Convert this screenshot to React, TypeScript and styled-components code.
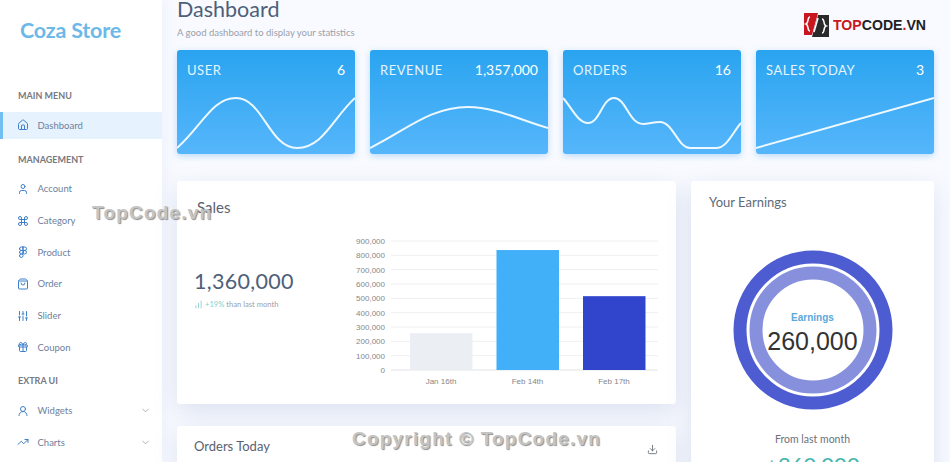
import React from 'react'
import styled, { createGlobalStyle } from 'styled-components'
import {
  House,
  User,
  Command,
  Figma,
  ShoppingBag,
  SlidersVertical,
  Gift,
  UserRound,
  TrendingUp,
  ChevronDown,
  Download,
  ChartNoAxesColumnIncreasing,
} from 'lucide-react'

const GlobalStyle = createGlobalStyle`
  html, body {
    margin: 0;
    padding: 0;
    height: 462px;
    overflow: hidden;
    background: #f8faff;
    font-family: Lato, "Open Sans", sans-serif;
  }
`

const Page = styled.div`
  position: relative;
  display: flex;
  width: 950px;
  height: 462px;
  overflow: hidden;
`

const Sidebar = styled.aside`
  flex: 0 0 162px;
  background: #fff;
  padding-top: 18px;
  box-sizing: border-box;
  box-shadow: 3px 0 12px rgba(120, 140, 190, .08);
`

const Logo = styled.div`
  margin-left: 20px;
  height: 25px;
  line-height: 25px;
  font-size: 21.5px;
  font-weight: 700;
  letter-spacing: -.2px;
  color: #6cb9e8;
`

const MenuLabel = styled.div<{ $top: number }>`
  margin: ${p => p.$top}px 0 9.7px 18px;
  height: 12px;
  line-height: 12px;
  font-size: 9px;
  font-weight: 700;
  color: #77797f;
`

const MenuItem = styled.div<{ $active?: boolean }>`
  display: flex;
  align-items: center;
  height: 27px;
  margin-top: 4.7px;
  padding: 0 11px 0 ${p => (p.$active ? 14 : 17)}px;
  font-size: 9.5px;
  color: #6e7f9d;
  background: ${p => (p.$active ? '#e6f2fe' : 'transparent')};
  border-left: ${p => (p.$active ? '3px solid #74bdf3' : 'none')};
  & > svg:first-child {
    width: 12px;
    height: 12px;
    color: #3f7fc9;
    margin-right: 8.5px;
    flex: none;
  }
`

const Spacer = styled.span`
  flex: 1;
`

const Caret = styled(ChevronDown)`
  width: 11px;
  height: 11px;
  color: #a5abb6;
`

const Main = styled.main`
  flex: 1;
  padding: 0 16px 0 15px;
  min-width: 0;
`

const Title = styled.h1`
  margin: 0;
  height: 20px;
  line-height: 18px;
  font-size: 21.5px;
  font-weight: 400;
  color: #4e6079;
`

const Subtitle = styled.p`
  margin: 6px 0 0;
  height: 13px;
  line-height: 13px;
  font-size: 9.5px;
  color: #9aa0aa;
`

const StatRow = styled.div`
  display: grid;
  grid-template-columns: repeat(4, 178px);
  gap: 15px;
  margin-top: 11px;
`

const StatCard = styled.div`
  height: 104px;
  display: flex;
  flex-direction: column;
  justify-content: space-between;
  border-radius: 3px;
  background: linear-gradient(180deg, #2aa4f0, #56b6fb);
  box-shadow: 0 2px 6px rgba(70, 160, 240, .35);
  overflow: hidden;
  color: #e4f4ff;
`

const StatHead = styled.div`
  display: flex;
  justify-content: space-between;
  align-items: center;
  padding: 11px 10px 0;
  font-size: 13px;
  letter-spacing: .55px;
`

const StatValue = styled.span`
  font-size: 14px;
  letter-spacing: 0;
  color: #fff;
`

const Spark = styled.svg`
  display: block;
  width: 178px;
  height: 60px;
  fill: none;
  stroke: #eef8ff;
  stroke-width: 2;
`

const Columns = styled.div`
  display: grid;
  grid-template-columns: 499px 243px;
  gap: 15px;
  margin-top: 27px;
`

const Stack = styled.div`
  display: flex;
  flex-direction: column;
  gap: 22px;
`

const Panel = styled.section`
  background: #fff;
  border-radius: 3px;
  box-shadow: 0 8px 24px rgba(110, 130, 180, .2);
`

const SalesPanel = styled(Panel)`
  height: 223px;
  box-sizing: border-box;
  padding: 17px 11px 0 17px;
`

const SalesTitle = styled.h2`
  margin: 0 0 0 3px;
  height: 18px;
  line-height: 18px;
  font-size: 15px;
  font-weight: 400;
  color: #5a6270;
`

const SalesBody = styled.div`
  display: flex;
  justify-content: space-between;
`

const SalesFigure = styled.div`
  padding-top: 52px;
`

const BigNumber = styled.div`
  font-size: 21.5px;
  line-height: 26px;
  letter-spacing: .3px;
  color: #4e6079;
`

const Trend = styled.div`
  display: flex;
  align-items: center;
  margin-top: 5px;
  font-size: 7.6px;
  color: #9aa0aa;
  & svg {
    width: 9px;
    height: 9px;
    color: #7cc8c0;
    margin-right: 2px;
  }
  & b {
    font-weight: 400;
    color: #86d0c8;
    margin-right: 2px;
  }
`

const BarChart = styled.svg`
  display: block;
  width: 325px;
  height: 160px;
  margin-top: 16px;
  font-family: "Liberation Sans", Arial, sans-serif;
  font-size: 8px;
  fill: #85878c;
`

const OrdersPanel = styled(Panel)`
  display: flex;
  justify-content: space-between;
  align-items: center;
  height: 40px;
  padding: 0 18px 0 17px;
`

const OrdersTitle = styled.h2`
  margin: 0;
  font-size: 13px;
  font-weight: 400;
  color: #5a6270;
`

const OrdersAction = styled(Download)`
  width: 11px;
  height: 11px;
  color: #6c727c;
  margin-top: 6px;
`

const EarningsPanel = styled(Panel)`
  height: 300px;
  padding: 14px 18px 0;
  text-align: center;
`

const EarningsTitle = styled.h2`
  margin: 0;
  height: 14px;
  line-height: 14px;
  text-align: left;
  font-size: 13px;
  font-weight: 400;
  color: #5f6b78;
`

const Donut = styled.div`
  position: relative;
  width: 160px;
  height: 160px;
  margin: 41px auto 0;
  font-family: "Liberation Sans", Arial, sans-serif;
  & svg {
    display: block;
    fill: none;
  }
`

const DonutCaption = styled.div`
  position: absolute;
  inset: 61px 0 auto;
  font-size: 10px;
  font-weight: 700;
  line-height: 14px;
  color: #5aa9dd;
`

const DonutValue = styled.div`
  position: absolute;
  inset: 76px 0 auto;
  font-size: 25px;
  line-height: 30px;
  color: #333;
`

const FromLabel = styled.div`
  margin-top: 22px;
  font-size: 10.5px;
  line-height: 14px;
  color: #6c727c;
`

const FromValue = styled.div`
  margin-top: 6px;
  font-size: 22px;
  line-height: 26px;
  color: #45b7ad;
`

const Watermark = styled.div<{ $x: number; $y: number }>`
  position: absolute;
  left: ${p => p.$x}px;
  top: ${p => p.$y}px;
  font-family: "Liberation Sans", Arial, sans-serif;
  font-size: 19px;
  font-weight: 700;
  line-height: 1;
  letter-spacing: 1.2px;
  white-space: nowrap;
  color: #c4c4c4;
  text-shadow: 1px 1px 1px #8e8e8e;
`

const Brand = styled.div`
  position: absolute;
  left: 803px;
  top: 12px;
  display: flex;
  align-items: center;
  gap: 3px;
  font-family: "Liberation Sans", Arial, sans-serif;
  font-size: 15.5px;
  font-weight: 700;
  color: #222;
`

const BrandText = styled.span`
  display: inline-block;
  transform: scaleX(.91);
  transform-origin: left center;
  white-space: nowrap;
`

const BrandRed = styled.span`
  color: #c8171e;
`

const menuTop = [
  { label: 'Account', icon: <User /> },
  { label: 'Category', icon: <Command /> },
  { label: 'Product', icon: <Figma /> },
  { label: 'Order', icon: <ShoppingBag /> },
  { label: 'Slider', icon: <SlidersVertical /> },
  { label: 'Coupon', icon: <Gift /> },
]

const stats = [
  { label: 'USER', value: '6', line: 'M0 98C25 76 35 48 59 48C86 48 92 98 120 98C146 98 156 68 178 48' },
  { label: 'REVENUE', value: '1,357,000', line: 'M0 98C35 81 60 57 98 57C125 57 150 70 178 78' },
  {
    label: 'ORDERS',
    value: '16',
    line: 'M0 48C9 58 15 73 25 73C37 73 39 48 51 48C63 48 66 74 80 74C86 74 90 72 97 72C110 72 115 98 127 98L153 98C164 98 170 82 178 73',
  },
  { label: 'SALES TODAY', value: '3', line: 'M0 98L178 48' },
]

const ticks = [900, 800, 700, 600, 500, 400, 300, 200, 100, 0]
const bars = [
  { label: 'Jan 16th', x: 70, value: 257, color: '#ebeff4' },
  { label: 'Feb 14th', x: 156.5, value: 837, color: '#41b0f8' },
  { label: 'Feb 17th', x: 243, value: 515, color: '#3144cc' },
]
// y of the zero line and pixels per thousand inside the chart
const baseY = 138
const perK = 129 / 900

const App = () => (
  <Page>
    <GlobalStyle />
    <Sidebar>
      <Logo>Coza Store</Logo>
      <MenuLabel $top={47}>MAIN MENU</MenuLabel>
      <MenuItem $active><House />Dashboard</MenuItem>
      <MenuLabel $top={15}>MANAGEMENT</MenuLabel>
      {menuTop.map(item => (
        <MenuItem key={item.label}>{item.icon}{item.label}</MenuItem>
      ))}
      <MenuLabel $top={14.5}>EXTRA UI</MenuLabel>
      <MenuItem><UserRound />Widgets<Spacer /><Caret /></MenuItem>
      <MenuItem><TrendingUp />Charts<Spacer /><Caret /></MenuItem>
    </Sidebar>
    <Main>
      <Title>Dashboard</Title>
      <Subtitle>A good dashboard to display your statistics</Subtitle>
      <StatRow>
        {stats.map(s => (
          <StatCard key={s.label}>
            <StatHead>{s.label}<StatValue>{s.value}</StatValue></StatHead>
            <Spark viewBox="0 44 178 60"><path d={s.line} /></Spark>
          </StatCard>
        ))}
      </StatRow>
      <Columns>
        <Stack>
          <SalesPanel>
            <SalesTitle>Sales</SalesTitle>
            <SalesBody>
              <SalesFigure>
                <BigNumber>1,360,000</BigNumber>
                <Trend>
                  <ChartNoAxesColumnIncreasing />
                  <b>+19%</b> than last month
                </Trend>
              </SalesFigure>
              <BarChart viewBox="0 0 325 160">
                {ticks.map(t => {
                  const y = baseY - t * perK
                  return (
                    <g key={t}>
                      <line x1="51" x2="318" y1={y} y2={y} stroke={t === 0 ? '#e2e3e6' : '#eff0f2'} />
                      <text x="45" y={y + 3} textAnchor="end">{t === 0 ? '0' : `${t},000`}</text>
                    </g>
                  )
                })}
                {bars.map(b => (
                  <g key={b.label}>
                    <rect x={b.x} y={baseY - b.value * perK} width="62.5" height={b.value * perK} fill={b.color} />
                    <text x={b.x + 31} y={baseY + 14} textAnchor="middle">{b.label}</text>
                  </g>
                ))}
              </BarChart>
            </SalesBody>
          </SalesPanel>
          <OrdersPanel>
            <OrdersTitle>Orders Today</OrdersTitle>
            <OrdersAction />
          </OrdersPanel>
        </Stack>
        <EarningsPanel>
          <EarningsTitle>Your Earnings</EarningsTitle>
          <Donut>
            <svg width="160" height="160" viewBox="0 0 160 160">
              <circle cx="80" cy="80" r="73" stroke="#4d5cd0" strokeWidth="13" />
              <circle cx="80" cy="80" r="57" stroke="#8790dd" strokeWidth="13" />
            </svg>
            <DonutCaption>Earnings</DonutCaption>
            <DonutValue>260,000</DonutValue>
          </Donut>
          <FromLabel>From last month</FromLabel>
          <FromValue>+260,000</FromValue>
        </EarningsPanel>
      </Columns>
    </Main>
    <Brand>
      <svg width="27" height="25" viewBox="0 0 27 25">
        <path d="M1 1H15L9 23H1Z" fill="#c8171e" />
        <path d="M15 3H26V25H9Z" fill="#2a2a2a" />
        <path d="M7 5C4 5 6 11 3 12C6 13 4 19 7 19" fill="none" stroke="#fff" strokeWidth="1.5" />
        <path d="M15 6L11 20" fill="none" stroke="#fff" strokeWidth="1.5" />
        <path d="M19 7C22 7 20 13 23 14C20 15 22 21 19 21" fill="none" stroke="#fff" strokeWidth="1.5" />
      </svg>
      <BrandText><BrandRed>TOP</BrandRed>CODE<BrandRed>.</BrandRed>VN</BrandText>
    </Brand>
    <Watermark $x={92} $y={203}>TopCode.vn</Watermark>
    <Watermark $x={352} $y={429}>Copyright © TopCode.vn</Watermark>
  </Page>
)

export default App
